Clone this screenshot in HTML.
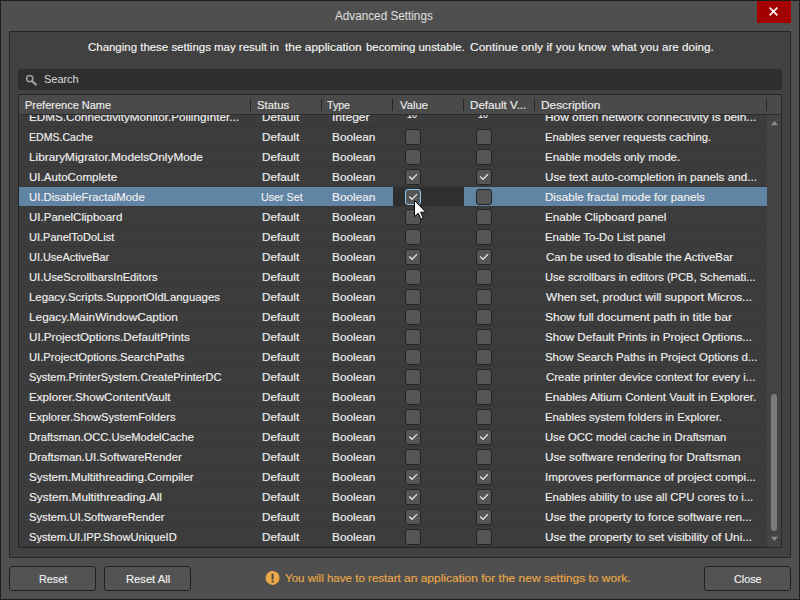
<!DOCTYPE html>
<html><head><meta charset="utf-8"><style>
html,body{margin:0;padding:0;width:800px;height:600px;overflow:hidden;background:#4f4f4f;}
body{position:relative;font-family:"Liberation Sans",sans-serif;font-size:11.5px;}
.t{position:absolute;white-space:nowrap;line-height:20px;height:20px;color:#f0f0f0;transform-origin:0 0;-webkit-text-stroke:0.15px currentColor;}
.cb{position:absolute;width:14px;height:14px;background:#555555;border:1px solid;border-radius:3px;}
.btn{position:absolute;top:566px;height:25px;width:87px;background:#535353;border:1px solid #202020;border-radius:3px;box-sizing:border-box;}
.a{position:absolute;}
</style></head><body>
<div class="a" style="left:0;top:0;width:800px;height:1px;background:#1c1c1c"></div>
<div class="a" style="left:0;top:0;width:1px;height:600px;background:#1c1c1c"></div>
<div class="a" style="left:0;top:599px;width:800px;height:1px;background:#1c1c1c"></div>
<div class="a" style="left:799px;top:0;width:1px;height:600px;background:#1c1c1c"></div>
<div class="a" style="left:757px;top:1px;width:34px;height:22px;background:#a30000">
<svg width="34" height="22" style="position:absolute;left:0;top:0"><path d="M12.6 6.6 L20.4 14.4 M20.4 6.6 L12.6 14.4" stroke="#ffffff" stroke-width="1.5"/></svg></div>
<div class="a" style="left:9px;top:31px;width:780px;height:525px;background:#414141;border:1px solid #262626"></div>
<div class="a" style="left:18px;top:69px;width:764px;height:21px;background:#2e2e2e;border-radius:3px"></div>
<svg width="20" height="20" style="position:absolute;left:20px;top:70px"><circle cx="9.7" cy="8.6" r="3.1" fill="none" stroke="#9c9c9c" stroke-width="1.6"/><path d="M12.1 11.1 L16 14.6" stroke="#9c9c9c" stroke-width="2.2" stroke-linecap="round"/></svg>
<div class="a" style="left:18px;top:94px;width:762px;height:452px;background:#3c3c3c;border:1px solid #262626"></div>
<div class="a" style="left:19px;top:95px;width:748px;height:452px;overflow:hidden">
<div class="a" style="left:-19px;top:-95px;width:800px;height:600px">
<div style="position:absolute;left:19px;top:126px;width:748px;height:1px;background:#363636"></div>
<div style="position:absolute;left:19px;top:146px;width:748px;height:1px;background:#363636"></div>
<div class="cb" style="left:405px;top:129px;border-color:#242424"></div>
<div class="cb" style="left:476px;top:129px;border-color:#242424"></div>
<div style="position:absolute;left:19px;top:166px;width:748px;height:1px;background:#363636"></div>
<div class="cb" style="left:405px;top:149px;border-color:#242424"></div>
<div class="cb" style="left:476px;top:149px;border-color:#242424"></div>
<div style="position:absolute;left:19px;top:186px;width:748px;height:1px;background:#363636"></div>
<div class="cb" style="left:405px;top:169px;border-color:#242424"><svg width="14" height="14" viewBox="0 0 14 14" style="position:absolute;left:0;top:0"><path d="M3.6 6.9 L6.1 9.3 L10.6 4.6" fill="none" stroke="#e8e8e8" stroke-width="1.25" stroke-linecap="square"/></svg></div>
<div class="cb" style="left:476px;top:169px;border-color:#242424"><svg width="14" height="14" viewBox="0 0 14 14" style="position:absolute;left:0;top:0"><path d="M3.6 6.9 L6.1 9.3 L10.6 4.6" fill="none" stroke="#e8e8e8" stroke-width="1.25" stroke-linecap="square"/></svg></div>
<div style="position:absolute;left:19px;top:187px;width:748px;height:19px;background:#6184a4"></div>
<div style="position:absolute;left:393px;top:187px;width:71px;height:19px;background:#2f2f2f"></div>
<div style="position:absolute;left:19px;top:206px;width:748px;height:1px;background:#363636"></div>
<div class="cb" style="left:405px;top:189px;border-color:#8ec6f2"><svg width="14" height="14" viewBox="0 0 14 14" style="position:absolute;left:0;top:0"><path d="M3.6 6.9 L6.1 9.3 L10.6 4.6" fill="none" stroke="#e8e8e8" stroke-width="1.25" stroke-linecap="square"/></svg></div>
<div class="cb" style="left:476px;top:189px;border-color:#242424"></div>
<div style="position:absolute;left:19px;top:226px;width:748px;height:1px;background:#363636"></div>
<div class="cb" style="left:405px;top:209px;border-color:#242424"></div>
<div class="cb" style="left:476px;top:209px;border-color:#242424"></div>
<div style="position:absolute;left:19px;top:246px;width:748px;height:1px;background:#363636"></div>
<div class="cb" style="left:405px;top:229px;border-color:#242424"></div>
<div class="cb" style="left:476px;top:229px;border-color:#242424"></div>
<div style="position:absolute;left:19px;top:266px;width:748px;height:1px;background:#363636"></div>
<div class="cb" style="left:405px;top:249px;border-color:#242424"><svg width="14" height="14" viewBox="0 0 14 14" style="position:absolute;left:0;top:0"><path d="M3.6 6.9 L6.1 9.3 L10.6 4.6" fill="none" stroke="#e8e8e8" stroke-width="1.25" stroke-linecap="square"/></svg></div>
<div class="cb" style="left:476px;top:249px;border-color:#242424"><svg width="14" height="14" viewBox="0 0 14 14" style="position:absolute;left:0;top:0"><path d="M3.6 6.9 L6.1 9.3 L10.6 4.6" fill="none" stroke="#e8e8e8" stroke-width="1.25" stroke-linecap="square"/></svg></div>
<div style="position:absolute;left:19px;top:286px;width:748px;height:1px;background:#363636"></div>
<div class="cb" style="left:405px;top:269px;border-color:#242424"></div>
<div class="cb" style="left:476px;top:269px;border-color:#242424"></div>
<div style="position:absolute;left:19px;top:306px;width:748px;height:1px;background:#363636"></div>
<div class="cb" style="left:405px;top:289px;border-color:#242424"></div>
<div class="cb" style="left:476px;top:289px;border-color:#242424"></div>
<div style="position:absolute;left:19px;top:326px;width:748px;height:1px;background:#363636"></div>
<div class="cb" style="left:405px;top:309px;border-color:#242424"></div>
<div class="cb" style="left:476px;top:309px;border-color:#242424"></div>
<div style="position:absolute;left:19px;top:346px;width:748px;height:1px;background:#363636"></div>
<div class="cb" style="left:405px;top:329px;border-color:#242424"></div>
<div class="cb" style="left:476px;top:329px;border-color:#242424"></div>
<div style="position:absolute;left:19px;top:366px;width:748px;height:1px;background:#363636"></div>
<div class="cb" style="left:405px;top:349px;border-color:#242424"></div>
<div class="cb" style="left:476px;top:349px;border-color:#242424"></div>
<div style="position:absolute;left:19px;top:386px;width:748px;height:1px;background:#363636"></div>
<div class="cb" style="left:405px;top:369px;border-color:#242424"></div>
<div class="cb" style="left:476px;top:369px;border-color:#242424"></div>
<div style="position:absolute;left:19px;top:406px;width:748px;height:1px;background:#363636"></div>
<div class="cb" style="left:405px;top:389px;border-color:#242424"></div>
<div class="cb" style="left:476px;top:389px;border-color:#242424"></div>
<div style="position:absolute;left:19px;top:426px;width:748px;height:1px;background:#363636"></div>
<div class="cb" style="left:405px;top:409px;border-color:#242424"></div>
<div class="cb" style="left:476px;top:409px;border-color:#242424"></div>
<div style="position:absolute;left:19px;top:446px;width:748px;height:1px;background:#363636"></div>
<div class="cb" style="left:405px;top:429px;border-color:#242424"><svg width="14" height="14" viewBox="0 0 14 14" style="position:absolute;left:0;top:0"><path d="M3.6 6.9 L6.1 9.3 L10.6 4.6" fill="none" stroke="#e8e8e8" stroke-width="1.25" stroke-linecap="square"/></svg></div>
<div class="cb" style="left:476px;top:429px;border-color:#242424"><svg width="14" height="14" viewBox="0 0 14 14" style="position:absolute;left:0;top:0"><path d="M3.6 6.9 L6.1 9.3 L10.6 4.6" fill="none" stroke="#e8e8e8" stroke-width="1.25" stroke-linecap="square"/></svg></div>
<div style="position:absolute;left:19px;top:466px;width:748px;height:1px;background:#363636"></div>
<div class="cb" style="left:405px;top:449px;border-color:#242424"></div>
<div class="cb" style="left:476px;top:449px;border-color:#242424"></div>
<div style="position:absolute;left:19px;top:486px;width:748px;height:1px;background:#363636"></div>
<div class="cb" style="left:405px;top:469px;border-color:#242424"><svg width="14" height="14" viewBox="0 0 14 14" style="position:absolute;left:0;top:0"><path d="M3.6 6.9 L6.1 9.3 L10.6 4.6" fill="none" stroke="#e8e8e8" stroke-width="1.25" stroke-linecap="square"/></svg></div>
<div class="cb" style="left:476px;top:469px;border-color:#242424"><svg width="14" height="14" viewBox="0 0 14 14" style="position:absolute;left:0;top:0"><path d="M3.6 6.9 L6.1 9.3 L10.6 4.6" fill="none" stroke="#e8e8e8" stroke-width="1.25" stroke-linecap="square"/></svg></div>
<div style="position:absolute;left:19px;top:506px;width:748px;height:1px;background:#363636"></div>
<div class="cb" style="left:405px;top:489px;border-color:#242424"><svg width="14" height="14" viewBox="0 0 14 14" style="position:absolute;left:0;top:0"><path d="M3.6 6.9 L6.1 9.3 L10.6 4.6" fill="none" stroke="#e8e8e8" stroke-width="1.25" stroke-linecap="square"/></svg></div>
<div class="cb" style="left:476px;top:489px;border-color:#242424"><svg width="14" height="14" viewBox="0 0 14 14" style="position:absolute;left:0;top:0"><path d="M3.6 6.9 L6.1 9.3 L10.6 4.6" fill="none" stroke="#e8e8e8" stroke-width="1.25" stroke-linecap="square"/></svg></div>
<div style="position:absolute;left:19px;top:526px;width:748px;height:1px;background:#363636"></div>
<div class="cb" style="left:405px;top:509px;border-color:#242424"><svg width="14" height="14" viewBox="0 0 14 14" style="position:absolute;left:0;top:0"><path d="M3.6 6.9 L6.1 9.3 L10.6 4.6" fill="none" stroke="#e8e8e8" stroke-width="1.25" stroke-linecap="square"/></svg></div>
<div class="cb" style="left:476px;top:509px;border-color:#242424"><svg width="14" height="14" viewBox="0 0 14 14" style="position:absolute;left:0;top:0"><path d="M3.6 6.9 L6.1 9.3 L10.6 4.6" fill="none" stroke="#e8e8e8" stroke-width="1.25" stroke-linecap="square"/></svg></div>
<div style="position:absolute;left:19px;top:546px;width:748px;height:1px;background:#363636"></div>
<div class="cb" style="left:405px;top:529px;border-color:#242424"></div>
<div class="cb" style="left:476px;top:529px;border-color:#242424"></div>
<div class="t" style="left:29.11px;top:107px;transform:scaleX(1.0168);">EDMS.ConnectivityMonitor.PollingInter...</div>
<div class="t" style="left:261.59px;top:107px;transform:scaleX(1.0207);">Default</div>
<div class="t" style="left:331.53px;top:107px;transform:scaleX(1.0500);">Integer</div>
<div class="t" style="left:407.06px;top:104px;transform:scaleX(0.7933);">10</div>
<div class="t" style="left:477.84px;top:104px;transform:scaleX(0.7711);">10</div>
<div class="t" style="left:545.29px;top:107px;transform:scaleX(1.0328);">How often network connectivity is bein...</div>
<div class="t" style="left:29.21px;top:127px;transform:scaleX(0.9179);">EDMS.Cache</div>
<div class="t" style="left:261.59px;top:127px;transform:scaleX(1.0207);">Default</div>
<div class="t" style="left:332.10px;top:127px;transform:scaleX(1.0282);">Boolean</div>
<div class="t" style="left:545.35px;top:127px;transform:scaleX(0.9777);">Enables server requests caching.</div>
<div class="t" style="left:29.08px;top:147px;transform:scaleX(1.0269);">LibraryMigrator.ModelsOnlyMode</div>
<div class="t" style="left:261.59px;top:147px;transform:scaleX(1.0207);">Default</div>
<div class="t" style="left:332.10px;top:147px;transform:scaleX(1.0282);">Boolean</div>
<div class="t" style="left:545.33px;top:147px;transform:scaleX(0.9966);">Enable models only mode.</div>
<div class="t" style="left:29.02px;top:167px;transform:scaleX(1.0061);">UI.AutoComplete</div>
<div class="t" style="left:261.59px;top:167px;transform:scaleX(1.0207);">Default</div>
<div class="t" style="left:332.10px;top:167px;transform:scaleX(1.0282);">Boolean</div>
<div class="t" style="left:545.20px;top:167px;transform:scaleX(1.0172);">Use text auto-completion in panels and...</div>
<div class="t" style="left:29.04px;top:187px;transform:scaleX(0.9894);">UI.DisableFractalMode</div>
<div class="t" style="left:261.11px;top:187px;transform:scaleX(0.9307);">User Set</div>
<div class="t" style="left:332.10px;top:187px;transform:scaleX(1.0282);">Boolean</div>
<div class="t" style="left:545.30px;top:187px;transform:scaleX(1.0083);">Disable fractal mode for panels</div>
<div class="t" style="left:29.02px;top:207px;">UI.PanelClipboard</div>
<div class="t" style="left:261.59px;top:207px;transform:scaleX(1.0207);">Default</div>
<div class="t" style="left:332.10px;top:207px;transform:scaleX(1.0282);">Boolean</div>
<div class="t" style="left:545.31px;top:207px;transform:scaleX(1.0145);">Enable Clipboard panel</div>
<div class="t" style="left:29.07px;top:227px;transform:scaleX(0.9593);">UI.PanelToDoList</div>
<div class="t" style="left:261.59px;top:227px;transform:scaleX(1.0207);">Default</div>
<div class="t" style="left:332.10px;top:227px;transform:scaleX(1.0282);">Boolean</div>
<div class="t" style="left:545.34px;top:227px;transform:scaleX(0.9865);">Enable To-Do List panel</div>
<div class="t" style="left:29.08px;top:247px;transform:scaleX(0.9503);">UI.UseActiveBar</div>
<div class="t" style="left:261.59px;top:247px;transform:scaleX(1.0207);">Default</div>
<div class="t" style="left:332.10px;top:247px;transform:scaleX(1.0282);">Boolean</div>
<div class="t" style="left:545.83px;top:247px;transform:scaleX(0.9917);">Can be used to disable the ActiveBar</div>
<div class="t" style="left:29.05px;top:267px;transform:scaleX(0.9767);">UI.UseScrollbarsInEditors</div>
<div class="t" style="left:261.59px;top:267px;transform:scaleX(1.0207);">Default</div>
<div class="t" style="left:332.10px;top:267px;transform:scaleX(1.0282);">Boolean</div>
<div class="t" style="left:545.26px;top:267px;transform:scaleX(0.9682);">Use scrollbars in editors (PCB, Schemati...</div>
<div class="t" style="left:29.12px;top:287px;transform:scaleX(0.9899);">Legacy.Scripts.SupportOldLanguages</div>
<div class="t" style="left:261.59px;top:287px;transform:scaleX(1.0207);">Default</div>
<div class="t" style="left:332.10px;top:287px;transform:scaleX(1.0282);">Boolean</div>
<div class="t" style="left:546.14px;top:287px;transform:scaleX(1.0262);">When set, product will support Micros...</div>
<div class="t" style="left:29.08px;top:307px;transform:scaleX(1.0279);">Legacy.MainWindowCaption</div>
<div class="t" style="left:261.59px;top:307px;transform:scaleX(1.0207);">Default</div>
<div class="t" style="left:332.10px;top:307px;transform:scaleX(1.0282);">Boolean</div>
<div class="t" style="left:545.20px;top:307px;transform:scaleX(1.0446);">Show full document path in title bar</div>
<div class="t" style="left:29.01px;top:327px;transform:scaleX(1.0109);">UI.ProjectOptions.DefaultPrints</div>
<div class="t" style="left:261.59px;top:327px;transform:scaleX(1.0207);">Default</div>
<div class="t" style="left:332.10px;top:327px;transform:scaleX(1.0282);">Boolean</div>
<div class="t" style="left:545.23px;top:327px;transform:scaleX(1.0115);">Show Default Prints in Project Options...</div>
<div class="t" style="left:29.05px;top:347px;transform:scaleX(0.9760);">UI.ProjectOptions.SearchPaths</div>
<div class="t" style="left:261.59px;top:347px;transform:scaleX(1.0207);">Default</div>
<div class="t" style="left:332.10px;top:347px;transform:scaleX(1.0282);">Boolean</div>
<div class="t" style="left:545.26px;top:347px;transform:scaleX(0.9917);">Show Search Paths in Project Options d...</div>
<div class="t" style="left:29.10px;top:367px;transform:scaleX(0.9525);">System.PrinterSystem.CreatePrinterDC</div>
<div class="t" style="left:261.59px;top:367px;transform:scaleX(1.0207);">Default</div>
<div class="t" style="left:332.10px;top:367px;transform:scaleX(1.0282);">Boolean</div>
<div class="t" style="left:545.83px;top:367px;transform:scaleX(0.9955);">Create printer device context for every i...</div>
<div class="t" style="left:29.11px;top:387px;transform:scaleX(1.0129);">Explorer.ShowContentVault</div>
<div class="t" style="left:261.59px;top:387px;transform:scaleX(1.0207);">Default</div>
<div class="t" style="left:332.10px;top:387px;transform:scaleX(1.0282);">Boolean</div>
<div class="t" style="left:545.31px;top:387px;transform:scaleX(1.0118);">Enables Altium Content Vault in Explorer.</div>
<div class="t" style="left:29.16px;top:407px;transform:scaleX(0.9710);">Explorer.ShowSystemFolders</div>
<div class="t" style="left:261.59px;top:407px;transform:scaleX(1.0207);">Default</div>
<div class="t" style="left:332.10px;top:407px;transform:scaleX(1.0282);">Boolean</div>
<div class="t" style="left:545.34px;top:407px;transform:scaleX(0.9851);">Enables system folders in Explorer.</div>
<div class="t" style="left:29.15px;top:427px;transform:scaleX(0.9696);">Draftsman.OCC.UseModelCache</div>
<div class="t" style="left:261.59px;top:427px;transform:scaleX(1.0207);">Default</div>
<div class="t" style="left:332.10px;top:427px;transform:scaleX(1.0282);">Boolean</div>
<div class="t" style="left:545.25px;top:427px;transform:scaleX(0.9748);">Use OCC model cache in Draftsman</div>
<div class="t" style="left:29.12px;top:447px;transform:scaleX(0.9919);">Draftsman.UI.SoftwareRender</div>
<div class="t" style="left:261.59px;top:447px;transform:scaleX(1.0207);">Default</div>
<div class="t" style="left:332.10px;top:447px;transform:scaleX(1.0282);">Boolean</div>
<div class="t" style="left:545.20px;top:447px;transform:scaleX(1.0199);">Use software rendering for Draftsman</div>
<div class="t" style="left:29.03px;top:467px;transform:scaleX(1.0107);">System.Multithreading.Compiler</div>
<div class="t" style="left:261.59px;top:467px;transform:scaleX(1.0207);">Default</div>
<div class="t" style="left:332.10px;top:467px;transform:scaleX(1.0282);">Boolean</div>
<div class="t" style="left:545.18px;top:467px;transform:scaleX(1.0086);">Improves performance of project compi...</div>
<div class="t" style="left:29.02px;top:487px;transform:scaleX(1.0247);">System.Multithreading.All</div>
<div class="t" style="left:261.59px;top:487px;transform:scaleX(1.0207);">Default</div>
<div class="t" style="left:332.10px;top:487px;transform:scaleX(1.0282);">Boolean</div>
<div class="t" style="left:545.34px;top:487px;transform:scaleX(0.9902);">Enables ability to use all CPU cores to i...</div>
<div class="t" style="left:29.08px;top:507px;transform:scaleX(0.9722);">System.UI.SoftwareRender</div>
<div class="t" style="left:261.59px;top:507px;transform:scaleX(1.0207);">Default</div>
<div class="t" style="left:332.10px;top:507px;transform:scaleX(1.0282);">Boolean</div>
<div class="t" style="left:545.20px;top:507px;transform:scaleX(1.0207);">Use the property to force software ren...</div>
<div class="t" style="left:29.09px;top:527px;transform:scaleX(0.9642);">System.UI.IPP.ShowUniqueID</div>
<div class="t" style="left:261.59px;top:527px;transform:scaleX(1.0207);">Default</div>
<div class="t" style="left:332.10px;top:527px;transform:scaleX(1.0282);">Boolean</div>
<div class="t" style="left:545.19px;top:527px;transform:scaleX(1.0253);">Use the property to set visibility of Uni...</div>
</div></div>
<div class="a" style="left:767px;top:115px;width:14px;height:432px;background:#444444"></div>
<svg width="14" height="432" style="position:absolute;left:767px;top:115px">
<path d="M4 10.2 L7.5 6 L11 10.2 Z" fill="#8c8c8c"/>
<path d="M4 421.8 L7.5 426 L11 421.8 Z" fill="#8c8c8c"/>
<rect x="4" y="279" width="6" height="137" rx="3" fill="#7b7b7b"/>
</svg>
<div class="a" style="left:19px;top:95px;width:762px;height:19px;background:#4a4a4a"></div>
<div class="a" style="left:19px;top:114px;width:762px;height:1px;background:#2b2b2b"></div>
<div style="position:absolute;left:250px;top:99px;width:1px;height:12px;background:#242424"></div>
<div style="position:absolute;left:321px;top:99px;width:1px;height:12px;background:#242424"></div>
<div style="position:absolute;left:392px;top:99px;width:1px;height:12px;background:#242424"></div>
<div style="position:absolute;left:463px;top:99px;width:1px;height:12px;background:#242424"></div>
<div style="position:absolute;left:534px;top:99px;width:1px;height:12px;background:#242424"></div>
<div style="position:absolute;left:766px;top:99px;width:1px;height:12px;background:#242424"></div>
<div class="t" style="left:24.97px;top:95px;color:#ececec;transform:scaleX(0.9555);">Preference Name</div>
<div class="t" style="left:257.16px;top:95px;color:#ececec;transform:scaleX(0.9857);">Status</div>
<div class="t" style="left:327.40px;top:95px;color:#ececec;transform:scaleX(0.9224);">Type</div>
<div class="t" style="left:399.52px;top:95px;color:#ececec;transform:scaleX(0.9795);">Value</div>
<div class="t" style="left:470.30px;top:95px;color:#ececec;transform:scaleX(1.0086);">Default V...</div>
<div class="t" style="left:541.18px;top:95px;color:#ececec;transform:scaleX(1.0318);">Description</div>
<div class="btn" style="left:9px"></div>
<div class="btn" style="left:104px"></div>
<div class="btn" style="left:704px"></div>
<svg width="16" height="16" style="position:absolute;left:265px;top:570px"><circle cx="7.6" cy="7.9" r="7" fill="#eaa848"/><rect x="6.6" y="3.8" width="2" height="5.6" fill="#4a4a4a"/><rect x="6.6" y="10.4" width="2" height="2" fill="#4a4a4a"/></svg>
<div class="t" style="left:334.75px;top:6px;font-size:12px;color:#e0e0e0;transform:scaleX(0.9771);-webkit-text-stroke:0;">Advanced Settings</div>
<div class="t" style="left:87.83px;top:37px;color:#f4f4f4;transform:scaleX(0.9957);">Changing these settings may result in</div>
<div class="t" style="left:284.65px;top:37px;color:#f4f4f4;transform:scaleX(1.0342);">the application</div>
<div class="t" style="left:365.72px;top:37px;color:#f4f4f4;transform:scaleX(0.9894);">becoming unstable.</div>
<div class="t" style="left:470.41px;top:37px;color:#f4f4f4;transform:scaleX(1.0391);">Continue only if you know</div>
<div class="t" style="left:612.05px;top:37px;color:#f4f4f4;transform:scaleX(1.0142);">what you are doing.</div>
<div class="t" style="left:44.10px;top:69px;color:#d8d8d8;transform:scaleX(0.9518);-webkit-text-stroke:0.05px currentColor;">Search</div>
<div class="t" style="left:39.04px;top:569px;color:#f2f2f2;transform:scaleX(0.9402);">Reset</div>
<div class="t" style="left:126.25px;top:569px;color:#f2f2f2;transform:scaleX(0.9729);">Reset All</div>
<div class="t" style="left:734.16px;top:569px;color:#f2f2f2;transform:scaleX(0.9363);">Close</div>
<div class="t" style="left:284.67px;top:568px;color:#eaa848;transform:scaleX(1.0042);">You will have to restart</div>
<div class="t" style="left:403.77px;top:568px;color:#eaa848;transform:scaleX(1.0420);">an application for the new settings to work.</div>
<svg width="16" height="24" style="position:absolute;left:413px;top:199px"><path d="M1.5 1.5 L1.5 17.6 L5.2 14.2 L8.0 20.3 L10.3 19.3 L7.7 13.2 L12.9 13.2 Z" fill="#ffffff" stroke="#000000" stroke-width="1"/></svg>
</body></html>
